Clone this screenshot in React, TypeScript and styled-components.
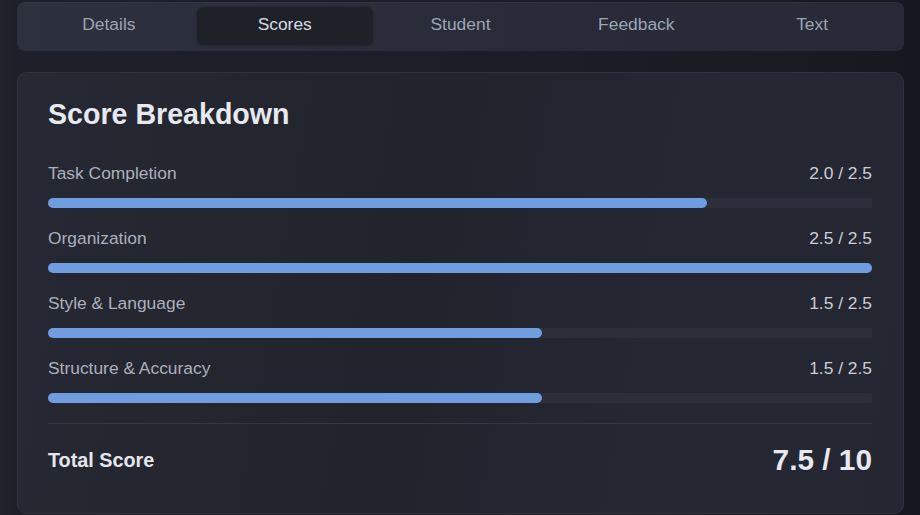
import React from "react";
import styled, { createGlobalStyle } from "styled-components";

const GlobalStyle = createGlobalStyle`
  html, body {
    margin: 0;
    padding: 0;
    background: #1b1c24;
  }
  body {
    font-family: "Liberation Sans", Arial, sans-serif;
  }
`;

/* ── Data ── */

interface Criterion {
  label: string;
  score: number;
  max: number;
}

const CRITERIA: Criterion[] = [
  { label: "Task Completion", score: 2.0, max: 2.5 },
  { label: "Organization", score: 2.5, max: 2.5 },
  { label: "Style & Language", score: 1.5, max: 2.5 },
  { label: "Structure & Accuracy", score: 1.5, max: 2.5 },
];

const TABS = ["Details", "Scores", "Student", "Feedback", "Text"];

/* ── Layout ── */

const Page = styled.div`
  min-height: 515px;
  box-sizing: border-box;
  padding: 2px 16px 0 17px;
  background: linear-gradient(90deg, #22232b 0, #1e1f28 17px, #1c1d26 60%, #17181f 100%);
`;

const TabBar = styled.nav`
  display: grid;
  grid-template-columns: repeat(5, 1fr);
  height: 49px;
  box-sizing: border-box;
  padding: 5px 4px 6px;
  border-radius: 8px;
  background: linear-gradient(90deg, #2d303d 0%, #292c38 60%, #272a36 100%);
  box-shadow: 0 1px 0 rgba(255, 255, 255, 0.03) inset;
`;

const Tab = styled.button<{ $active?: boolean }>`
  border: none;
  border-radius: 6px;
  padding: 0 0 3px;
  font-family: inherit;
  font-size: 17.4px;
  color: ${(p) => (p.$active ? "#d9dce3" : "#9ca4b5")};
  background: ${(p) => (p.$active ? "#1f2129" : "transparent")};
  box-shadow: ${(p) => (p.$active ? "0 1px 3px rgba(0,0,0,0.25)" : "none")};
  cursor: pointer;
`;

const Card = styled.section`
  margin-top: 21px;
  box-sizing: border-box;
  height: 442px;
  padding: 25px 31px 0 30px;
  border-radius: 10px;
  border: 1px solid #30333f;
  background: linear-gradient(100deg, #262833 0%, #23252f 25%, #21232d 45%, #252733 75%, #242631 100%);
`;

const Heading = styled.h2`
  margin: 0 0 34px;
  font-size: 28.6px;
  line-height: 32px;
  font-weight: 700;
  color: #e6e9ef;
`;

const Row = styled.div`
  display: flex;
  flex-direction: column;
  margin-bottom: 21px;
`;

const RowHead = styled.div`
  display: flex;
  justify-content: space-between;
  align-items: center;
  height: 18px;
  margin-bottom: 16px;
  font-size: 17.4px;
`;

const Label = styled.span`
  color: #abb0bd;
`;

const Value = styled.span`
  color: #cbced6;
`;

const Track = styled.div`
  height: 10px;
  border-radius: 2px;
  background: #2c2f3b;
  overflow: hidden;
`;

const Fill = styled.div`
  height: 100%;
  border-radius: 5px;
  background: #6f9de0;
`;

const Divider = styled.hr`
  margin: -1px 0 0;
  border: none;
  border-top: 1px solid #353845;
`;

const TotalRow = styled.div`
  display: flex;
  justify-content: space-between;
  align-items: center;
  padding-top: 20px;
  height: 32px;
`;

const TotalLabel = styled.span`
  font-size: 19.8px;
  font-weight: 700;
  color: #e3e6ec;
`;

const TotalValue = styled.span`
  font-size: 29.8px;
  font-weight: 700;
  color: #e6e9ef;
`;

export default function App() {
  const total = CRITERIA.reduce((s, c) => s + c.score, 0);
  return (
    <>
      <GlobalStyle />
      <Page>
        <TabBar>
          {TABS.map((t) => (
            <Tab key={t} $active={t === "Scores"}>
              {t}
            </Tab>
          ))}
        </TabBar>
        <Card>
          <Heading>Score Breakdown</Heading>
          {CRITERIA.map((c) => (
            <Row key={c.label}>
              <RowHead>
                <Label>{c.label}</Label>
                <Value>
                  {c.score.toFixed(1)} / {c.max.toFixed(1)}
                </Value>
              </RowHead>
              <Track>
                <Fill style={{ width: `${(c.score / c.max) * 100}%` }} />
              </Track>
            </Row>
          ))}
          <Divider />
          <TotalRow>
            <TotalLabel>Total Score</TotalLabel>
            <TotalValue>{total.toFixed(1)} / 10</TotalValue>
          </TotalRow>
        </Card>
      </Page>
    </>
  );
}
